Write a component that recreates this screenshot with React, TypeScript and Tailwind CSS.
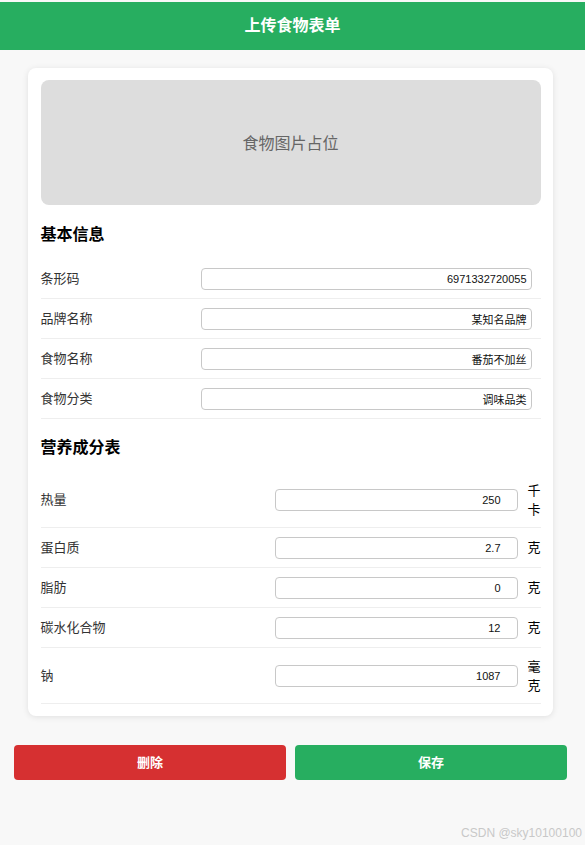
const basic = [
  { label: "条形码", value: "6971332720055" },
  { label: "品牌名称", value: "某知名品牌" },
  { label: "食物名称", value: "番茄不加丝" },
  { label: "食物分类", value: "调味品类" },
];

const nutrition = [
  { label: "热量", value: "250", unit: "千卡" },
  { label: "蛋白质", value: "2.7", unit: "克" },
  { label: "脂肪", value: "0", unit: "克" },
  { label: "碳水化合物", value: "12", unit: "克" },
  { label: "钠", value: "1087", unit: "毫克" },
];

const font = "font-['Liberation_Sans','Noto_Sans_CJK_SC',sans-serif]";

export default function App() {
  return (
    <div className={`min-h-[845px] w-[585px] bg-[#f8f8f8] pt-[2px] ${font}`}>
      <header className="flex h-[48px] items-center justify-center bg-[#27ae60] text-[16px] font-bold text-white">
        上传食物表单
      </header>

      <div className="w-[581px]">
        <div className="mx-[28px] mt-[18px] rounded-lg bg-white px-[12.5px] py-[12px] shadow-[0_1px_6px_rgba(0,0,0,0.1)]">
          <div className="flex h-[125px] items-center justify-center rounded-lg bg-[#dddddd] pt-[3px] text-[16px] text-[#666]">
            食物图片占位
          </div>

          <h3 className="mt-[19px] mb-[13px] text-[16px] leading-[22px] font-bold text-black">
            基本信息
          </h3>
          {basic.map((f) => (
            <div
              key={f.label}
              className="flex items-center border-b border-[#eee] py-[8.5px]"
            >
              <span className="w-[160px] text-[13px] text-[#333]">{f.label}</span>
              <input
                readOnly
                defaultValue={f.value}
                className="h-[22px] w-[331px] rounded-[4px] border border-[#c8c8c8] pr-[4px] text-right text-[11px] text-[#111] outline-none"
              />
            </div>
          ))}

          <h3 className="mt-[18px] mb-[13px] text-[16px] leading-[22px] font-bold text-black">
            营养成分表
          </h3>
          {nutrition.map((f) => (
            <div
              key={f.label}
              className="flex items-center border-b border-[#eee] py-[8.5px]"
            >
              <span className="flex-1 text-[13px] text-[#333]">{f.label}</span>
              <input
                readOnly
                defaultValue={f.value}
                className="h-[22px] w-[243px] rounded-[4px] border border-[#c8c8c8] pr-[16px] text-right text-[11px] text-[#111] outline-none"
              />
              <span className="ml-[10px] w-[13px] text-[13px] leading-[19px] text-black">
                {f.unit}
              </span>
            </div>
          ))}
        </div>

        <div className="mt-[29px] flex gap-[9px] pl-[14px] pr-[14px]">
          <button className="h-[35px] flex-1 rounded-[4px] bg-[#d63031] text-[13px] font-bold text-white">
            删除
          </button>
          <button className="h-[35px] flex-1 rounded-[4px] bg-[#27ae60] text-[13px] font-bold text-white">
            保存
          </button>
        </div>
      </div>

      <div className="mt-[45px] pr-[3px] text-right text-[12px] leading-[16px] text-[#c8c8c8]">
        CSDN @sky10100100
      </div>
    </div>
  );
}
